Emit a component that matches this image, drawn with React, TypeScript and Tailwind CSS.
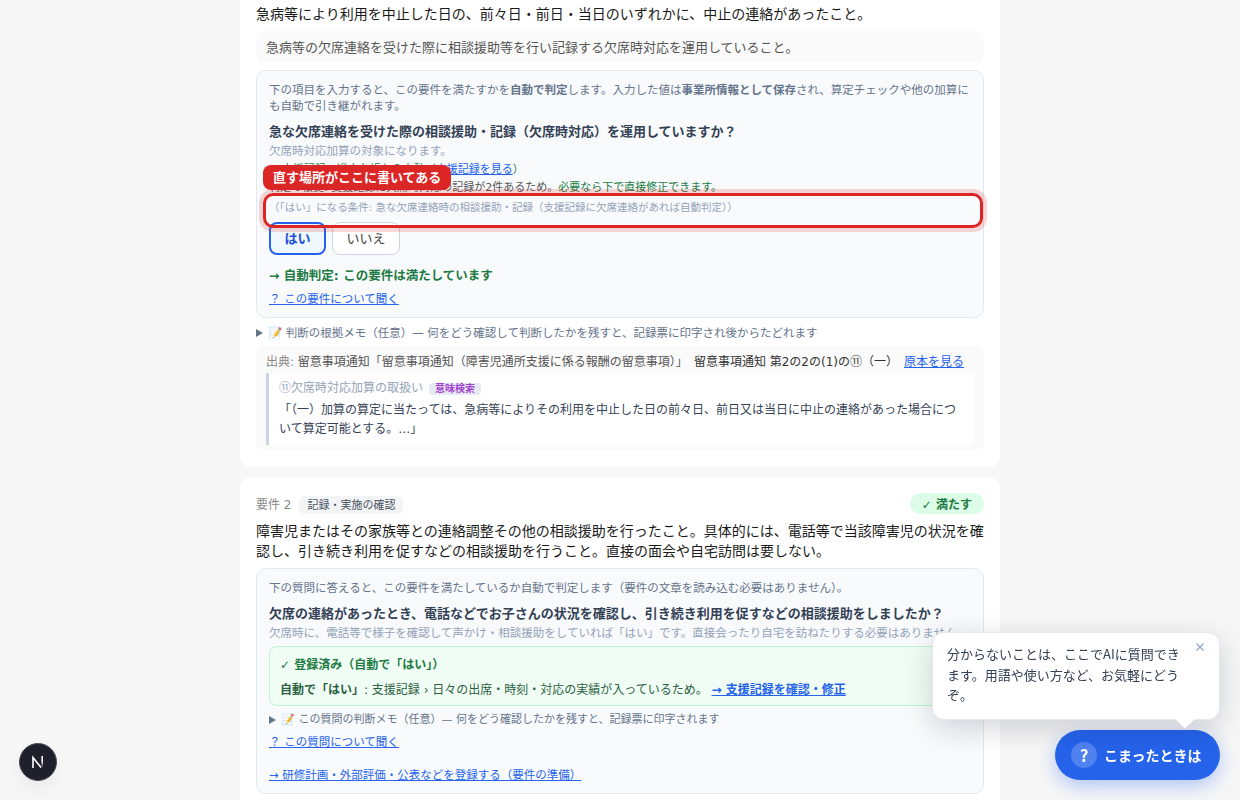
import type { ReactNode } from "react";

const TextLink = ({ children, className = "" }: { children: ReactNode; className?: string }) => (
  <a href="#" className={`text-[#2563eb] underline ${className}`}>
    {children}
  </a>
);

const MemoToggle = ({ children, className = "" }: { children: ReactNode; className?: string }) => (
  <div className={`flex h-[18px] items-center leading-[18px] text-[#64748b] ${className}`}>
    <svg width="7" height="8" viewBox="0 0 7 8" className="mr-[5px] shrink-0" fill="currentColor">
      <path d="M0 0 7 4 0 8z" />
    </svg>
    <span>{children}</span>
  </div>
);

const FirstRequirement = () => (
  <section className="h-[467px] rounded-b-xl bg-white px-4 pt-1">
    <p className="text-[14px] leading-5 text-[#1a1a1a]">
      急病等により利用を中止した日の、前々日・前日・当日のいずれかに、中止の連絡があったこと。
    </p>
    <p className="mt-[7px] h-[31px] rounded-lg bg-[#fafafa] px-[10px] text-[13px] leading-[34px] text-[#555]">
      急病等の欠席連絡を受けた際に相談援助等を行い記録する欠席時対応を運用していること。
    </p>

    <div className="mt-2 h-[248px] rounded-[10px] border border-[#e2e8f0] bg-[#f8fafc] px-3 pt-[11px]">
      <p className="text-[11.5px] leading-4 text-[#64748b]">
        下の項目を入力すると、この要件を満たすかを<b>自動で判定</b>します。入力した値は
        <b>事業所情報として保存</b>され、算定チェックや他の加算にも自動で引き継がれます。
      </p>
      <p className="mt-2 text-[13px] font-bold leading-5 text-[#334155]">
        急な欠席連絡を受けた際の相談援助・記録（欠席時対応）を運用していますか？
      </p>
      <p className="text-[11.5px] leading-[18px] text-[#94a3b8]">欠席時対応加算の対象になります。</p>
      <div className="relative pt-px">
        <p className="text-[11px] leading-[18px] text-[#217a43]">
          ✓ 支援記録・過去台帳から自動（<TextLink>支援記録を見る</TextLink>）
        </p>
        <p className="whitespace-nowrap text-[11px] leading-[18px] text-[#555]">
          判定の根拠: 支援記録に欠席時対応の記録が2件あるため。
          <span className="text-[#217a43]">必要なら下で直接修正できます。</span>
        </p>
        <p className="mt-px text-[10.5px] leading-[18px] text-[#94a3b8]">
          （「はい」になる条件: 急な欠席連絡時の相談援助・記録（支援記録に欠席連絡があれば自動判定））
        </p>
        {/* callout over the condition text */}
        <div className="absolute -left-[6px] top-[33px] z-10 h-[35px] w-[720px] rounded-[10px] border-[3px] border-[#dc2626] shadow-[0_0_0_4px_rgba(220,38,38,0.18)]" />
        <div className="absolute -left-[6px] top-[5px] z-10 h-[25px] whitespace-nowrap rounded-lg bg-[#dc2626] px-[10px] text-[13px] font-bold leading-[26px] text-white">
          直す場所がここに書いてある
        </div>
      </div>
      <div className="mt-[6px] flex gap-[6px] text-[13px]">
        <button className="h-[33px] w-[57px] rounded-lg border-2 border-[#2563eb] bg-[#eff8fc] font-bold text-[#1d4ed8]">
          はい
        </button>
        <button className="h-[33px] w-[68px] rounded-lg border border-[#cbd5e1] bg-white text-[#444]">いいえ</button>
      </div>
      <p className="mt-3 text-[12.5px] font-bold leading-[18px] text-[#217a43]">
        → 自動判定: この要件は満たしています
      </p>
      <p className="mt-[5px] text-[11.5px] leading-[18px]">
        <TextLink>？ この要件について聞く</TextLink>
      </p>
    </div>

    <MemoToggle className="mt-[6px] text-[11.5px]">
      📝 判断の根拠メモ（任意）— 何をどう確認して判断したかを残すと、記録票に印字され後からたどれます
    </MemoToggle>

    <div className="mt-1 h-[104px] rounded-lg bg-[#fafafa] px-[10px] pt-[7px] text-xs leading-[18px]">
      <p className="flex whitespace-pre text-[#555]">
        <span className="text-[#888]">出典: </span>
        <span>留意事項通知「留意事項通知（障害児通所支援に係る報酬の留意事項）」</span>
        <span className="ml-[6px] text-[#333]">留意事項通知 第2の2の(1)の⑪（一）</span>
        <TextLink className="ml-[6px]">原本を見る</TextLink>
      </p>
      <blockquote className="mt-[2px] h-[72px] border-l-[3px] border-[#cbd5e1] bg-white px-[10px] pt-[6px]">
        <div className="flex items-center text-[#94a3b8]">
          ⑪欠席時対応加算の取扱い
          <span className="ml-[6px] mt-[2px] h-[12px] rounded bg-[#e8eaf3] px-[6px] text-[10px] font-bold leading-[12px] text-[#a044d0]">
            意味検索
          </span>
        </div>
        <p className="mt-1 leading-[19px] text-[#334155]">
          「（一）加算の算定に当たっては、急病等によりその利用を中止した日の前々日、前日又は当日に中止の連絡があった場合について算定可能とする。…」
        </p>
      </blockquote>
    </div>
  </section>
);

const SecondRequirement = () => (
  <section className="h-[400px] rounded-xl bg-white px-4 pt-4">
    <div className="flex h-[21px] items-center">
      <span className="mt-[2px] text-xs text-[#888]">要件 2</span>
      <span className="ml-2 mt-[2px] h-[18px] rounded-md bg-[#f3f4f6] px-2 text-[11px] leading-[19px] text-[#4b5563]">
        記録・実施の確認
      </span>
      <span className="ml-auto h-[21px] rounded-full bg-[#dcfce7] px-3 text-xs font-bold leading-[24px] text-[#217a43]">
        ✓ 満たす
      </span>
    </div>
    <p className="mt-[7px] text-[14px] leading-5 text-[#1a1a1a]">
      障害児またはその家族等との連絡調整その他の相談援助を行ったこと。具体的には、電話等で当該障害児の状況を確認し、引き続き利用を促すなどの相談援助を行うこと。直接の面会や自宅訪問は要しない。
    </p>

    <div className="mt-[7px] h-[226px] rounded-[10px] border border-[#e2e8f0] bg-[#f8fafc] px-3 pt-[11px]">
      <p className="text-[11.5px] leading-4 text-[#64748b]">
        下の質問に答えると、この要件を満たしているか自動で判定します（要件の文章を読み込む必要はありません）。
      </p>
      <p className="mt-2 text-[13px] font-bold leading-5 text-[#334155]">
        欠席の連絡があったとき、電話などでお子さんの状況を確認し、引き続き利用を促すなどの相談援助をしましたか？
      </p>
      <p className="whitespace-nowrap text-[11.5px] leading-[18px] text-[#94a3b8]">
        欠席時に、電話等で様子を確認して声かけ・相談援助をしていれば「はい」です。直接会ったり自宅を訪ねたりする必要はありません。
      </p>
      <div className="mt-[4px] h-[60px] rounded-lg border border-[#bbf7d0] bg-[#f0fdf4] px-[10px] pt-[9px] text-xs leading-[18px]">
        <p className="font-bold text-[#217a43]">✓ 登録済み（自動で「はい」）</p>
        <p className="mt-[7px] text-[#2b5f42]">
          <b>自動で「はい」</b>: 支援記録 › 日々の出席・時刻・対応の実績が入っているため。{" "}
          <TextLink className="font-bold">→ 支援記録を確認・修正</TextLink>
        </p>
      </div>
      <MemoToggle className="mt-[5px] text-[11px]">
        📝 この質問の判断メモ（任意）— 何をどう確認したかを残すと、記録票に印字されます
      </MemoToggle>
      <p className="mt-[4px] text-[11.5px] leading-[18px]">
        <TextLink>？ この質問について聞く</TextLink>
      </p>
      <p className="mt-[15px] text-[11.5px] leading-[18px]">
        <TextLink>→ 研修計画・外部評価・公表などを登録する（要件の準備）</TextLink>
      </p>
    </div>
  </section>
);

const HelpWidget = () => (
  <div className="fixed bottom-5 right-5 z-20 flex flex-col items-end gap-[10px]">
    <div className="relative h-[88px] w-[288px] rounded-xl border border-[#e2e8f0] bg-white pl-[14px] pr-9 pt-[11px] font-['Noto_Sans_CJK_JP',sans-serif] text-[13px] leading-[20.5px] text-[#334155] shadow-[0_8px_30px_rgba(15,23,42,0.18)]">
      分からないことは、ここでAIに質問できます。用語や使い方など、お気軽にどうぞ。
      <svg
        width="8"
        height="8"
        viewBox="0 0 8 8"
        className="absolute right-[15px] top-[10px]"
        stroke="#94a3b8"
        strokeWidth="1.2"
      >
        <path d="M0.5 0.5l7 7M7.5 0.5l-7 7" />
      </svg>
      <svg width="20" height="10" viewBox="0 0 20 10" className="absolute -bottom-[10px] right-[24px]" fill="#fff">
        <path d="M0 0H20L10 9.5z" />
      </svg>
    </div>
    <button className="flex h-[50px] w-[165px] items-center rounded-full bg-[#2563eb] pl-4 text-[14px] font-bold text-white shadow-[0_6px_20px_rgba(37,99,235,0.35)]">
      <span className="mr-[7px] flex size-[26px] items-center justify-center rounded-full bg-white/20 font-['Noto_Sans_CJK_JP',sans-serif] text-[17px] leading-[24px]">
        ?
      </span>
      <span className="mt-[2px]">こまったときは</span>
    </button>
  </div>
);

const DevBadge = () => (
  <div className="fixed bottom-[19px] left-[19px] z-20 flex size-[38px] items-center justify-center rounded-full border border-[#4b4b52] bg-[#1e202b] shadow-[0_8px_20px_rgba(0,0,0,0.06)]">
    <svg width="14" height="14" viewBox="0 0 14 14" fill="none">
      <defs>
        <linearGradient id="fade" x1="0" y1="0" x2="0" y2="1">
          <stop offset="0.4" stopColor="#fff" />
          <stop offset="1" stopColor="#fff" stopOpacity="0" />
        </linearGradient>
      </defs>
      <path d="M2 13V2.5L10 12.5" stroke="#fff" strokeWidth="1.6" />
      <rect x="10.4" y="1" width="1.6" height="12" fill="url(#fade)" />
    </svg>
  </div>
);

export default function App() {
  return (
    <main className="h-screen overflow-hidden bg-[#f7f7f7] font-['DejaVu_Sans','Noto_Sans_CJK_JP',sans-serif]" lang="ja">
      <div className="mx-auto flex w-[760px] flex-col gap-[10px]">
        <FirstRequirement />
        <SecondRequirement />
      </div>
      <HelpWidget />
      <DevBadge />
    </main>
  );
}
